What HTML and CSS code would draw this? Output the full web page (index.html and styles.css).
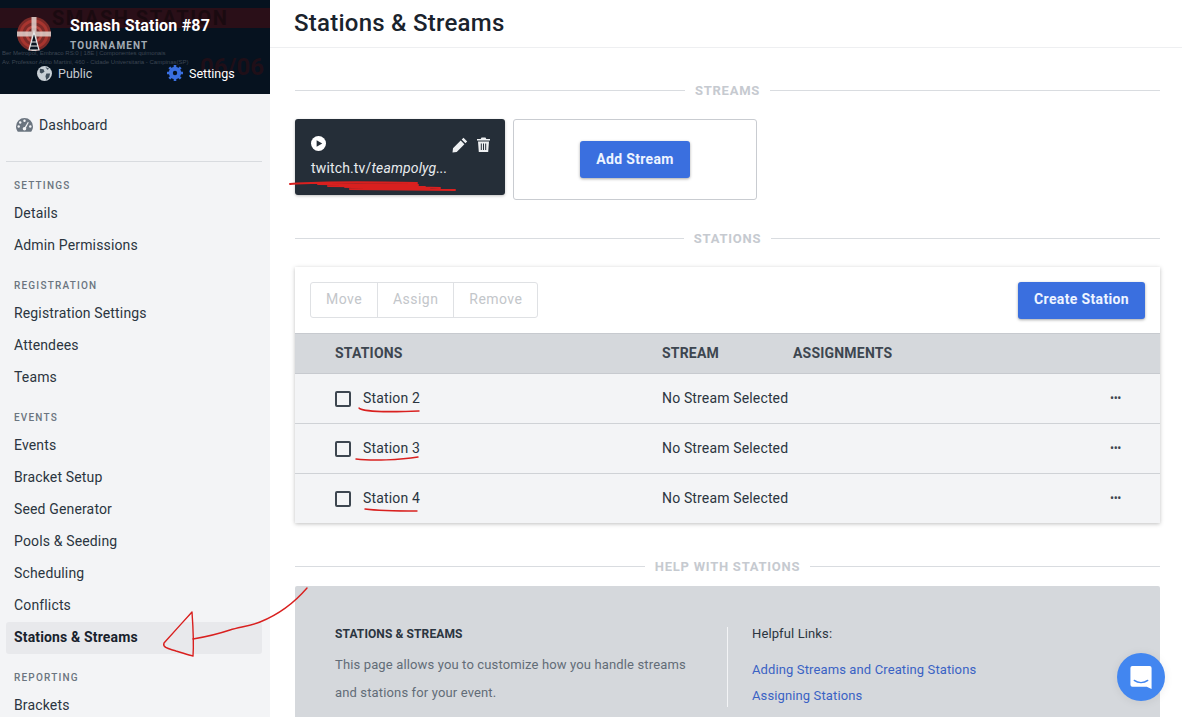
FILE: index.html
```html
<!DOCTYPE html>
<html>
<head>
    <title>Stations &amp; Streams</title>
    <link rel="stylesheet" href="styles.css">
</head>
<body>
    <aside class="sidebar">
        <div class="banner">
            <div class="banner-bg">
                <div class="bg-title">SMASH STATION</div>
                <div class="bg-line bg-line-one">Ber Metropol, Embraco RS:0 | 18E | Componentes quimonais</div>
                <div class="bg-line bg-line-two">Av. Professor Atilio Martini, 460 - Cidade Universitaria - Campinas(SP)</div>
                <div class="bg-date">06/06</div>
            </div>
            <div class="banner-head">
                <svg class="logo" width="34" height="34" viewBox="0 0 34 34">
                    <circle cx="17" cy="17" r="17" fill="#7c2a28"/>
                    <circle cx="17" cy="17" r="13" fill="none" stroke="#a8352f" stroke-width="3"/>
                    <circle cx="17" cy="17" r="7.500" fill="none" stroke="#b8453e" stroke-width="2.500"/>
                    <path d="M0 17H34M17 0V34" stroke="#e4dcd8" stroke-width="5" opacity=".8"/>
                    <path d="M17 15L12 33H22ZM14 25H20M13 29H21" fill="#0a1420" stroke="#e8e8e8" stroke-width="1.200"/>
                </svg>
                <div>
                    <div class="banner-name">Smash Station #87</div>
                    <div class="banner-type">TOURNAMENT</div>
                </div>
            </div>
            <div class="banner-tabs">
                <span class="banner-tab tab-public">
                    <svg width="15" height="15" viewBox="0 0 16 16"><circle cx="8" cy="8" r="8" fill="#c9d0d6"/><path d="M3 3l4 .5 1 2.500-3 2-2-1zM10 8l4 0-1 4-3 3-1-4zM9 1l4 2-2 1z" fill="#3f4d5a"/></svg>
                    Public
                </span>
                <span class="banner-tab tab-settings">
                    <svg width="16" height="16" viewBox="0 0 16 16"><circle cx="8" cy="8" r="4.500" fill="none" stroke="#3a6fe0" stroke-width="3.400"/><path d="M8 0V16M0 8H16M2.300 2.300L13.700 13.700M13.700 2.300L2.300 13.700" stroke="#3a6fe0" stroke-width="2.600"/><circle cx="8" cy="8" r="2.200" fill="#06121f"/></svg>
                    Settings
                </span>
            </div>
        </div>

        <nav class="nav">
            <a class="nav-item nav-dash">
                <svg width="17" height="14" viewBox="0 0 17 14"><path d="M8.500 0A8.500 8.500 0 0 0 0 8.500C0 10.500.7 12.300 1.800 13.700H15.200C16.300 12.300 17 10.500 17 8.500A8.500 8.500 0 0 0 8.500 0Z" fill="#6b7580"/><g fill="#f3f4f6"><circle cx="8.500" cy="2.800" r="1.200"/><circle cx="4.200" cy="4.500" r="1.200"/><circle cx="2.700" cy="8.500" r="1.200"/><circle cx="14.300" cy="8.500" r="1.200"/><circle cx="8.500" cy="10.800" r="1.800"/><path d="M8 10.500L11.800 4l1 .6-3.500 6.500z"/></g></svg>
                Dashboard
            </a>
            <div class="nav-rule"></div>

            <div class="nav-label nav-label-first">SETTINGS</div>
            <a class="nav-item">Details</a>
            <a class="nav-item">Admin Permissions</a>

            <div class="nav-label">REGISTRATION</div>
            <a class="nav-item">Registration Settings</a>
            <a class="nav-item">Attendees</a>
            <a class="nav-item">Teams</a>

            <div class="nav-label">EVENTS</div>
            <a class="nav-item">Events</a>
            <a class="nav-item">Bracket Setup</a>
            <a class="nav-item">Seed Generator</a>
            <a class="nav-item">Pools &amp; Seeding</a>
            <a class="nav-item">Scheduling</a>
            <a class="nav-item">Conflicts</a>
            <a class="nav-item nav-active">Stations &amp; Streams</a>

            <div class="nav-label">REPORTING</div>
            <a class="nav-item">Brackets</a>
        </nav>
    </aside>

    <main class="main">
        <header class="page-head">
            <h1>Stations &amp; Streams</h1>
        </header>

        <div class="content">
            <div class="divider"><span>STREAMS</span></div>

            <div class="streams">
                <div class="stream-card">
                    <div class="stream-icons">
                        <svg width="15" height="15" viewBox="0 0 16 16"><circle cx="8" cy="8" r="8" fill="#fff"/><path d="M6 4.500L12 8 6 11.500Z" fill="#252e38"/></svg>
                        <span class="stream-actions">
                            <svg width="16" height="16" viewBox="0 0 16 16"><path d="M11.500.8l3.700 3.700-1.800 1.800-3.700-3.700zM8.700 3.600l3.700 3.700-7.700 7.700L.5 15.500 1 11.300z" fill="#eef0f2"/></svg>
                            <svg width="13" height="15" viewBox="0 0 13 15"><path d="M4.500.5H8.500L9.300 2H13V3.500H0V2H3.700ZM1 4.500H12L11.200 15H1.800Z" fill="#eef0f2"/><path d="M4.300 6.500V13M6.500 6.500V13M8.700 6.500V13" stroke="#252e38" stroke-width="1"/></svg>
                        </span>
                    </div>
                    <div class="stream-url">twitch.tv/<em>teampolyg...</em></div>
                </div>
                <div class="stream-add">
                    <button class="btn-blue">Add Stream</button>
                </div>
            </div>

            <div class="divider divider-stations"><span>STATIONS</span></div>

            <section class="panel">
                <div class="toolbar">
                    <div class="btn-group">
                        <span>Move</span>
                        <span>Assign</span>
                        <span>Remove</span>
                    </div>
                    <button class="btn-blue">Create Station</button>
                </div>
                <div class="table-head">
                    <span class="col-name">STATIONS</span>
                    <span class="col-stream">STREAM</span>
                    <span>ASSIGNMENTS</span>
                </div>
                <div class="table-row">
                    <span class="col-name"><i class="check"></i>Station 2</span>
                    <span class="col-stream">No Stream Selected</span>
                    <span class="dots">&bull;&bull;&bull;</span>
                </div>
                <div class="table-row">
                    <span class="col-name"><i class="check"></i>Station 3</span>
                    <span class="col-stream">No Stream Selected</span>
                    <span class="dots">&bull;&bull;&bull;</span>
                </div>
                <div class="table-row">
                    <span class="col-name"><i class="check"></i>Station 4</span>
                    <span class="col-stream">No Stream Selected</span>
                    <span class="dots">&bull;&bull;&bull;</span>
                </div>
            </section>

            <div class="divider divider-help"><span>HELP WITH STATIONS</span></div>

            <section class="help">
                <div class="help-left">
                    <h3>STATIONS &amp; STREAMS</h3>
                    <p>This page allows you to customize how you handle streams and stations for your event.</p>
                </div>
                <div class="help-right">
                    <div class="help-links-title">Helpful Links:</div>
                    <a>Adding Streams and Creating Stations</a>
                    <a>Assigning Stations</a>
                </div>
            </section>
        </div>
    </main>

    <!-- red pen marks drawn on top of the screenshot -->
    <svg class="marks" width="1182" height="717" viewBox="0 0 1182 717">
        <g fill="none" stroke="#d9201f" stroke-linecap="round" stroke-linejoin="round">
            <path d="M290 184C320 182 370 182 417 183M318 184L418 185M328 186C370 186 410 187 440 188M335 185L425 187M345 187L430 188M350 189L455 190" stroke-width="2"/>
            <path d="M359 408C362 412 395 412 419 411" stroke-width="1.400"/>
            <path d="M356 459C372 461 400 460 418 457" stroke-width="1.400"/>
            <path d="M365 509C380 511 400 511 417 511" stroke-width="1.400"/>
            <path d="M307 588C295 602 280 614 260 622C250 626 240 627 230 630C218 634 205 637 193 639" stroke-width="1.400"/>
            <path d="M192 612C183 622 172 634 164 643C162 648 170 649 176 651C183 653 188 655 193 656C194 642 193 626 192 612Z" stroke-width="1.400"/>
        </g>
    </svg>

    <div class="chat">
        <svg width="24" height="25" viewBox="0 0 24 26"><path d="M3 1H21A2 2 0 0 1 23 3V25L18 22.500H3A2 2 0 0 1 1 20.500V3A2 2 0 0 1 3 1Z" fill="#fff"/><path d="M5 16C9 19 15 19 19 16" fill="none" stroke="#4286f0" stroke-width="1.400" stroke-linecap="round"/></svg>
    </div>
</body>
</html>
```

FILE: styles.css
```css
html, body {
    height: 100%;
}

body {
    margin: 0;
    display: flex;
    height: 717px;
    overflow: hidden;
    position: relative;
    font-family: Roboto, "Liberation Sans", sans-serif;
    font-size: 14px;
    color: #1f2933;
    background: #fff;
}

/* sidebar */
.sidebar {
    width: 270px;
    flex-shrink: 0;
    background: #f3f4f6;
    overflow: hidden;
}

.banner {
    height: 94px;
    background: #06121f;
    position: relative;
    overflow: hidden;
    color: #fff;
}

.banner-bg {
    position: absolute;
    top: 0;
    left: 0;
    width: 100%;
    height: 100%;
}

.bg-title {
    height: 20px;
    margin-top: 8px;
    padding-left: 52px;
    background: #2a0f18;
    color: #1a0a10;
    font-size: 20px;
    font-weight: 700;
    line-height: 20px;
    letter-spacing: 1.500px;
}

.bg-line {
    position: absolute;
    left: 2px;
    font-family: "Liberation Sans", sans-serif;
    font-size: 6px;
    color: #3c4653;
    white-space: nowrap;
}

.bg-line-one {
    top: 50px;
}

.bg-line-two {
    top: 59px;
}

.bg-date {
    position: absolute;
    right: 6px;
    top: 53px;
    font-size: 24px;
    font-weight: 700;
    color: #1f0f18;
}

.banner-head {
    position: relative;
    display: flex;
    gap: 19px;
    height: 48px;
    padding: 17px 0 0 17px;
}

.banner-name {
    font-size: 16px;
    font-weight: 700;
    line-height: 19px;
    letter-spacing: .2px;
    margin-top: -1px;
}

.banner-type {
    font-size: 10px;
    font-weight: 700;
    letter-spacing: 1.100px;
    color: #a3abb4;
    margin-top: 5px;
}

.banner-tabs {
    position: relative;
    display: flex;
    height: 16px;
    font-size: 12.500px;
}

.banner-tab {
    display: flex;
    align-items: center;
    gap: 6px;
}

.tab-public {
    margin-left: 37px;
    color: #c6ccd2;
    width: 130px;
}

.nav {
    padding: 15px 8px 0 6px;
}

.nav-item {
    display: block;
    height: 32px;
    line-height: 30px;
    padding-left: 8px;
    letter-spacing: .15px;
    color: #2b3540;
}

.nav-dash {
    display: flex;
    align-items: center;
    gap: 6px;
    padding-left: 10px;
    letter-spacing: .1px;
}

.nav-rule {
    border-top: 1px solid #d8dbdf;
    margin-top: 20px;
}

.nav-label {
    height: 12px;
    line-height: 12px;
    margin: 18px 0 6px;
    padding-left: 8px;
    font-size: 10px;
    font-weight: 500;
    letter-spacing: 1.200px;
    color: #6b7580;
}

.nav-label-first {
    margin-top: 18px;
}

.nav-active {
    background: #e8e9ec;
    border-radius: 3px;
    font-weight: 700;
    color: #18222c;
}

/* main */
.main {
    flex: 1;
    min-width: 0;
}

.page-head {
    height: 47px;
    border-bottom: 1px solid #eeeff1;
    padding-left: 24px;
}

.page-head h1 {
    margin: 0;
    font-size: 24px;
    font-weight: 500;
    line-height: 46px;
    letter-spacing: .25px;
    color: #1a232d;
}

.content {
    width: 865px;
    padding: 0 22px 0 25px;
}

.divider {
    display: flex;
    align-items: center;
    gap: 10px;
    height: 14px;
    margin-top: 35px;
    font-size: 13px;
    font-weight: 700;
    letter-spacing: .75px;
    color: #c6cad0;
}

.divider::before,
.divider::after {
    content: '';
    flex: 1;
    border-top: 1px solid #d9dce0;
}

.streams {
    display: flex;
    gap: 8px;
    margin-top: 22px;
    align-items: flex-start;
}

.stream-card {
    width: 210px;
    height: 76px;
    box-sizing: border-box;
    padding: 17px 15px 0 16px;
    background: #252e38;
    border-radius: 3px;
    box-shadow: 0 1px 3px rgba(0, 0, 0, .25);
    color: #e9ecef;
}

.stream-icons {
    display: flex;
    justify-content: space-between;
    align-items: flex-start;
}

.stream-actions {
    display: flex;
    gap: 9px;
    margin-top: 1px;
}

.stream-url {
    margin-top: 7px;
    letter-spacing: .15px;
}

.stream-add {
    width: 244px;
    height: 81px;
    box-sizing: border-box;
    border: 1px solid #c9ccd1;
    border-radius: 3px;
    display: flex;
    align-items: center;
    justify-content: center;
}

.btn-blue {
    height: 37px;
    padding: 0 16px 2px;
    border: none;
    border-radius: 3px;
    background: #3a6fdf;
    box-shadow: 0 1px 3px rgba(0, 0, 0, .35);
    color: #eef4ff;
    font-family: Roboto, "Liberation Sans", sans-serif;
    font-size: 14px;
    font-weight: 700;
    letter-spacing: .35px;
}

.divider-stations {
    margin-top: 31px;
}

.panel {
    margin-top: 22px;
    box-shadow: 0 1px 4px rgba(0, 0, 0, .25);
    background: #f3f4f6;
}

.toolbar {
    height: 66px;
    box-sizing: border-box;
    padding: 0 15px;
    background: #fff;
    display: flex;
    align-items: center;
    justify-content: space-between;
}

.btn-group {
    display: flex;
    height: 36px;
    box-sizing: border-box;
    border: 1px solid #dfe1e4;
    border-radius: 3px;
    color: #c3c6ca;
    letter-spacing: .45px;
}

.btn-group span {
    padding: 0 15px;
    line-height: 32px;
    border-left: 1px solid #dfe1e4;
}

.btn-group span:first-child {
    border-left: none;
}

.table-head,
.table-row {
    display: flex;
    align-items: center;
    padding-left: 40px;
    padding-bottom: 2px;
    box-sizing: border-box;
    position: relative;
}

.table-head {
    height: 41px;
    background: #d5d8dc;
    border-top: 1px solid #c7cacf;
    border-bottom: 1px solid #c7cacf;
    font-weight: 700;
    letter-spacing: .2px;
    color: #3d4650;
}

.table-row {
    height: 50px;
    border-bottom: 1px solid #cfd2d6;
    letter-spacing: .15px;
    color: #2b3540;
}

.table-row:last-child {
    height: 49px;
    border-bottom: none;
}

.col-name {
    width: 327px;
    display: flex;
    align-items: center;
}

.col-stream {
    width: 131px;
}

.table-row .col-stream {
    white-space: nowrap;
}

.check {
    width: 12px;
    height: 12px;
    margin: 2px 12px 0 0;
    border: 2px solid #3d4650;
    border-radius: 2px;
}

.dots {
    position: absolute;
    right: 39px;
    font-size: 12px;
    letter-spacing: -.4px;
    color: #3d4650;
}

.divider-help {
    margin-top: 36px;
}

.help {
    display: flex;
    height: 160px;
    margin-top: 13px;
    padding: 41px 0 0 40px;
    box-sizing: border-box;
    background: #d5d8dc;
    border-radius: 2px;
}

.help-left {
    width: 392px;
    padding-right: 30px;
    box-sizing: border-box;
}

.help-left h3 {
    margin: 0 0 10px;
    font-size: 12px;
    font-weight: 700;
    line-height: 14px;
    letter-spacing: .1px;
    color: #2b3540;
}

.help-left p {
    margin: 0;
    font-size: 13px;
    line-height: 28px;
    letter-spacing: .14px;
    color: #626c77;
}

.help-right {
    height: 80px;
    padding-left: 24px;
    border-left: 1px solid #f3f4f6;
    font-size: 13px;
    letter-spacing: .12px;
}

.help-links-title {
    line-height: 14px;
    margin: 0 0 16px;
    color: #2b3540;
}

.help-right a {
    display: block;
    height: 26px;
    line-height: 26px;
    color: #3a62c4;
}

/* overlays */
.marks {
    position: absolute;
    top: 0;
    left: 0;
    pointer-events: none;
}

.chat {
    position: absolute;
    left: 1117px;
    top: 653px;
    width: 48px;
    height: 48px;
    border-radius: 50%;
    background: #4286f0;
    box-shadow: 0 1px 10px rgba(0, 0, 0, .08);
    display: flex;
    align-items: center;
    justify-content: center;
}
```
